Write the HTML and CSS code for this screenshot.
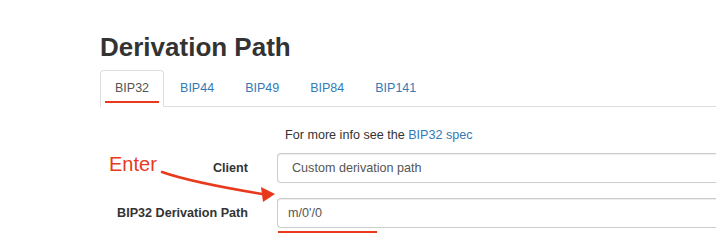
FILE: index.html
```html
<!DOCTYPE html>
<html lang="en">
<head>
    <meta charset="UTF-8">
    <title>Derivation Path</title>
    <link rel="stylesheet" href="styles.css">
</head>
<body>
    <div class="panel">
        <h2 class="title">Derivation Path</h2>

        <!-- Tabs -->
        <ul class="tabs">
            <li class="active"><a href="#">BIP32</a></li>
            <li><a href="#">BIP44</a></li>
            <li><a href="#">BIP49</a></li>
            <li><a href="#">BIP84</a></li>
            <li><a href="#">BIP141</a></li>
        </ul>

        <!-- BIP32 form -->
        <div class="form">
            <div></div>
            <p class="info">For more info see the <a href="#">BIP32 spec</a></p>

            <label class="label" for="client">Client</label>
            <div class="field">
                <select id="client" class="control select">
                    <option>Custom derivation path</option>
                </select>
            </div>

            <label class="label" for="path">BIP32 Derivation Path</label>
            <div class="field marked">
                <input id="path" class="control" type="text" value="m/0'/0">
            </div>
        </div>
    </div>

    <!-- Annotation -->
    <div class="note">Enter</div>
    <svg class="arrow" width="716" height="246" viewBox="0 0 716 246">
        <path d="M162 172 Q190 182 262 194" fill="none" stroke="#e8391d" stroke-width="2.6" stroke-linecap="round"/>
        <polygon points="275,194 261,187 263,202" fill="#e8391d"/>
    </svg>
</body>
</html>
```

FILE: styles.css
```css
body {
    margin: 0;
    width: 716px;
    height: 246px;
    overflow: hidden;
    position: relative;
    background: #fff;
    font-family: "Liberation Sans", Arial, sans-serif;
    font-size: 12.6px;
    color: #333;
}
a {
    color: #337ab7;
    text-decoration: none;
}
.panel {
    padding-left: 100px;
}
.title {
    margin: 32px 0 8px;
    font-size: 26px;
    line-height: 30px;
    font-weight: bold;
    color: #333;
}

/* tabs */
.tabs {
    display: flex;
    list-style: none;
    margin: 0;
    padding: 0;
    border-bottom: 1px solid #ddd;
}
.tabs li {
    margin: 0 1px -1px 0;
}
.tabs a {
    display: block;
    position: relative;
    padding: 9px 14px;
    line-height: 17px;
    font-size: 12.5px;
    border: 1px solid transparent;
    border-radius: 4px 4px 0 0;
}
.tabs .active a {
    color: #555;
    background: #fff;
    border-color: #ddd #ddd transparent;
}
.tabs .active a::after {
    content: "";
    position: absolute;
    left: 4px;
    right: 4px;
    bottom: 3px;
    height: 2px;
    background: #e8391d;
}

/* form - the inputs run on past the right edge of the window */
.form {
    display: grid;
    grid-template-columns: 148px 1fr;
    column-gap: 29px;
    row-gap: 15px;
    align-items: center;
    margin-top: 19px;
}
.info {
    margin: 0 0 -6px;
    padding-left: 8px;
    line-height: 18px;
}
.label {
    text-align: right;
    font-weight: bold;
}
.field {
    position: relative;
}
.control {
    display: block;
    box-sizing: border-box;
    width: 100%;
    height: 30px;
    margin: 0;
    padding: 0 10px;
    font-family: inherit;
    font-size: 12.6px;
    color: #555;
    background: #fff;
    border: 1px solid #ccc;
    border-right: none;
    border-radius: 4px 0 0 4px;
    box-shadow: inset 0 1px 1px rgba(0, 0, 0, .075);
    outline: none;
}
.select {
    appearance: none;
    -webkit-appearance: none;
    padding-left: 14px;
}
.marked::after {
    content: "";
    position: absolute;
    left: 1px;
    width: 99px;
    bottom: -5px;
    height: 2px;
    background: #e8391d;
}

/* annotation */
.note {
    position: absolute;
    left: 109px;
    top: 152px;
    font-size: 20px;
    line-height: 24px;
    color: #e8391d;
}
.arrow {
    position: absolute;
    left: 0;
    top: 0;
    pointer-events: none;
}
```
